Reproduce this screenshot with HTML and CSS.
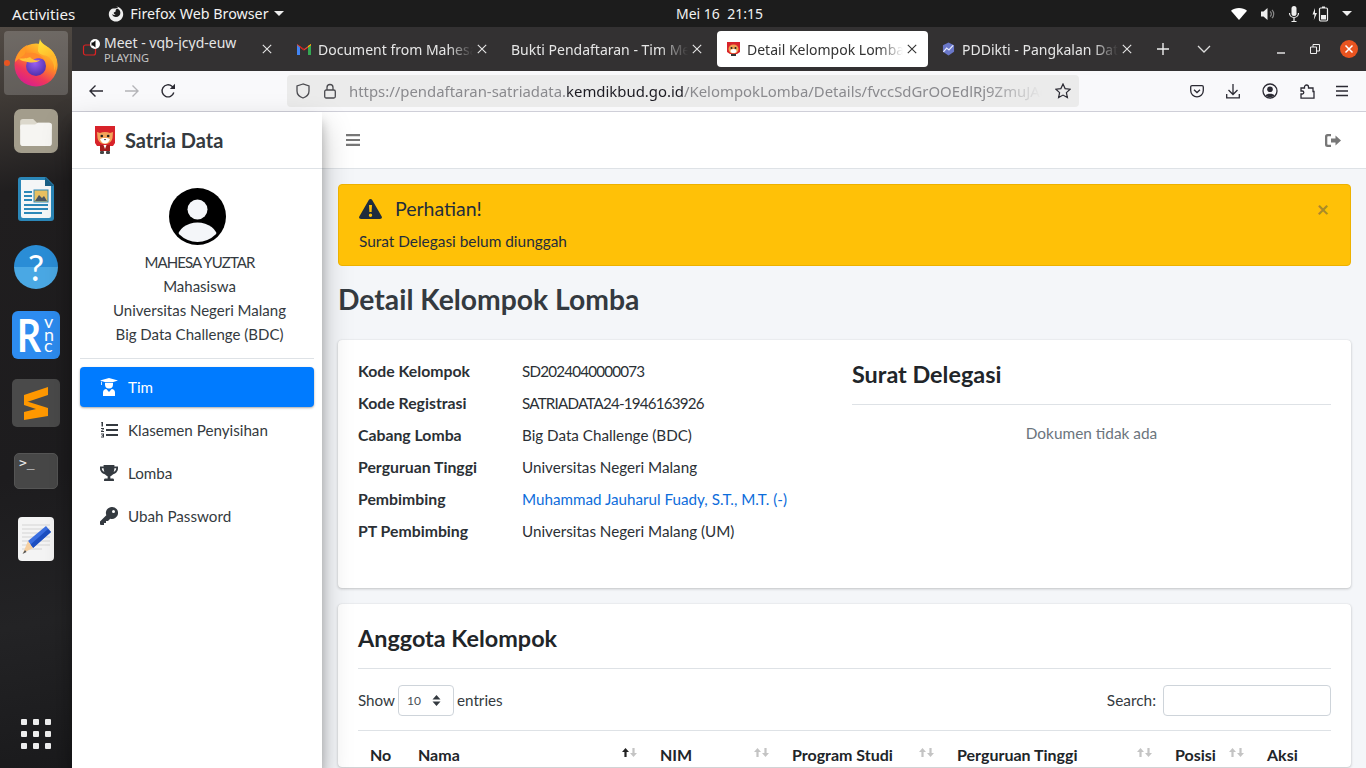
FILE: index.html
```html
<!DOCTYPE html>
<html lang="en">
<head>
  <meta charset="UTF-8">
  <title>Detail Kelompok Lomba</title>
  <link rel="stylesheet" href="styles.css">
</head>
<body>

  <header class="topbar">
    <span class="activities">Activities</span>
    <span class="appmenu">
      <svg class="app-icon" width="18" height="18" viewBox="0 0 18 18"><path fill="#eee" d="M9 1.500c1 .2 2 .9 2.400 1.800-1-.4-2.200-.3-3 .2 2.600-.3 5 1.500 5 4.200 0 2.600-2 4.300-4.400 4.300-2 0-3.600-1.300-3.800-3 .9 1 2.300 1.300 3.500.9-1.200-.5-1.900-1.200-2-2.200.5-.5 1.200-.9 1.900-1-.3-1.100.3-2.200 1-3C8.600 3.200 6 3.400 4.900 3.800 3 5 1.800 7 1.800 9.200c0 4 3.200 7.300 7.200 7.300s7.200-3.300 7.200-7.300C16.200 5.200 13 1.700 9 1.500z"/></svg>
      <span>Firefox Web Browser</span>
      <i class="caret"></i>
    </span>
    <span class="clock">Mei 16&nbsp;&nbsp;21:15</span>
    <span class="tray">
      <svg width="18" height="14" viewBox="0 0 18 14"><path fill="#fff" d="M1 3.800C3 2 6 1 9 1s6 1 8 2.800L9 13z"/></svg>
      <svg width="16" height="14" viewBox="0 0 16 14"><path fill="#eee" d="M1 4.500h2.500L7.500 1v12L3.500 9.500H1z"/><path fill="none" stroke="#888" stroke-width="1.200" d="M10 4.500a3 3 0 0 1 0 5M12 2.800a6 6 0 0 1 0 8.400"/></svg>
      <svg width="12" height="18" viewBox="0 0 12 18"><rect x="3.500" y="1" width="5" height="10" rx="2.500" fill="#eee"/><path fill="none" stroke="#eee" stroke-width="1.200" d="M1.500 8a4.500 4.500 0 0 0 9 0M6 12.500V16M3.500 16.500h5"/></svg>
      <svg width="18" height="18" viewBox="0 0 18 18"><path fill="#eee" d="M3 3 .5 9.500h2L1.800 15 5 8H3z"/><rect x="7.500" y="3" width="8" height="13" rx="1.200" fill="none" stroke="#eee" stroke-width="1.200"/><rect x="10" y="1.500" width="3" height="1.500" fill="#eee"/><rect x="9" y="10" width="5" height="4.500" fill="#eee"/></svg>
      <i class="caret"></i>
    </span>
  </header>

  <div class="desktop">
    <nav class="dock">
      <div class="dock-item dock-active">
        <i class="run-dot"></i>
        <svg width="46" height="48" viewBox="0 0 46 48">
          <defs>
            <linearGradient id="ffBody" x1="0.85" y1="0.1" x2="0.35" y2="1"><stop offset="0" stop-color="#ffd02e"/><stop offset=".4" stop-color="#ff8a26"/><stop offset=".72" stop-color="#f0385a"/><stop offset="1" stop-color="#d81f8c"/></linearGradient>
            <linearGradient id="ffHorn" x1="0" y1="0" x2="0.4" y2="1"><stop offset="0" stop-color="#ffe93a"/><stop offset="1" stop-color="#ffa726"/></linearGradient>
            <radialGradient id="ffCore" cx=".45" cy=".35" r=".7"><stop offset="0" stop-color="#9a5ff0"/><stop offset="1" stop-color="#4a2da8"/></radialGradient>
          </defs>
          <circle cx="23" cy="26" r="21.500" fill="url(#ffBody)"/>
          <path fill="url(#ffHorn)" d="M27 0c1 5 8 7 12 12 5 6 6 13 5 19-1-6-5-12-10-14-5-1-8-2-9-5 0-4 1-8 2-12z"/>
          <path fill="#ff9a26" d="M14 6c-5 3-11 9-12 17 3-3 6-5 9-5 1-4 2-8 3-12z"/>
          <path fill="#ffb52e" d="M36 18c4 4 6 9 5 14 2-4 3-10 1-15-2-2-4-1-6 1z"/>
          <circle cx="23" cy="27" r="10" fill="url(#ffCore)"/>
          <path fill="#ff8a2a" d="M6 21c3-4 8-8 14-7 5 .5 9 3 11 7-4-2.500-8-2-11 0-2 2-8 1.500-14 0z"/>
          <path fill="#ffc53a" d="M6 19.500c4 0 9 0 11-1.500 2 3 7 4 10 3-3 3-10 3-14 1.500-3 0-5-1-7-3z"/>
        </svg>
      </div>
      <div class="dock-item">
        <div class="files-tile">
          <svg width="32" height="28" viewBox="0 0 34 30"><path fill="#dcd8cc" d="M0 4a3 3 0 0 1 3-3h11l4 4h13a3 3 0 0 1 3 3v4H0z"/><path fill="#f6f5f2" d="M0 9a2 2 0 0 1 2-2h14l3-2h12a3 3 0 0 1 3 3v19a3 3 0 0 1-3 3H3a3 3 0 0 1-3-3z"/></svg>
        </div>
      </div>
      <div class="dock-item">
        <svg width="36" height="44" viewBox="0 0 36 44"><path fill="#2b87b8" d="M3 0h25l8 8v33a3 3 0 0 1-3 3H3a3 3 0 0 1-3-3V3a3 3 0 0 1 3-3z"/><path fill="#f4f6f7" d="M3 3h24v6h6v30a2 2 0 0 1-2 2H5a2 2 0 0 1-2-2z"/><path fill="#185f86" d="M27 0l9 9h-9z"/><path fill="#2b87b8" d="M6 14h8v2H6zM6 18h8v2H6zM6 22h8v2H6zM6 27h24v2H6zM6 31h24v2H6zM6 35h18v2H6z"/><rect x="16" y="13" width="14" height="12" fill="#e8c060" stroke="#2b87b8"/><path fill="#4a5560" d="M17 24l4-6 3 3 2-2 3 5z"/></svg>
      </div>
      <div class="dock-item"><div class="help-tile">?</div></div>
      <div class="dock-item">
        <svg width="48" height="48" viewBox="0 0 48 48"><rect width="48" height="48" rx="6" fill="#2d8cf0"/><text x="5" y="41" class="rvnc-r" textLength="24" lengthAdjust="spacingAndGlyphs">R</text><text x="32" y="17" class="rvnc-s">v</text><text x="32" y="30" class="rvnc-s">n</text><text x="32" y="41" class="rvnc-s">c</text></svg>
      </div>
      <div class="dock-item">
        <svg width="48" height="48" viewBox="0 0 48 48"><rect width="48" height="48" rx="5" fill="#4a4a4a"/><path fill="#ff9800" d="M12 16 36 8v8L12 24z"/><path fill="#ff9800" d="M12 21.500 36 29v8l-24 4v-8l12-3-12-4z"/></svg>
      </div>
      <div class="dock-item"><div class="term-tile">&gt;_</div></div>
      <div class="dock-item">
        <svg width="36" height="44" viewBox="0 0 36 44"><rect width="36" height="44" rx="4" fill="#f4f4f4"/><path stroke="#d4d4d4" fill="none" d="M4 8h28M4 12h28M4 16h28M4 20h28M4 24h28M4 28h28M4 32h20"/><path fill="#3b6fe0" d="M10 24 28 9l5 6-18 16z"/><path fill="#1d4fc0" d="M12 28 30 12l3 3-18 16z"/><path fill="#f5cfa0" d="M10 24l5 7-10 5z"/><path fill="#555" d="M7 33l-2.500 4 4-2z"/></svg>
      </div>
      <div class="dock-grid">
        <i></i><i></i><i></i><i></i><i></i><i></i><i></i><i></i><i></i>
      </div>
    </nav>

    <div class="browser">
      <div class="tabbar">
        <div class="tab tab-meet">
          <svg width="20" height="20" viewBox="0 0 20 20"><rect x="1.500" y="6" width="12" height="10" rx="2" fill="none" stroke="#d22" stroke-width="1.200"/><circle cx="13" cy="5" r="5" fill="#fff"/><path d="M9.500 3.500h1.500L13.500 1.500v7L11 6.500H9.500z" fill="#111"/></svg>
          <span class="tab-lines"><span class="tab-title">Meet - vqb-jcyd-euw</span><small>PLAYING</small></span>
          <svg class="tab-x" width="10" height="10" viewBox="0 0 10 10"><path stroke="#e6e6e6" stroke-width="1.100" d="M.8.800l8.400 8.400M9.200.800.800 9.200"/></svg>
        </div>
        <div class="tab">
          <svg width="14" height="11" viewBox="0 0 14 11"><path fill="#ea4335" d="M0 1.500 7 6.500l7-5V0L7 5 0 0z"/><path fill="#4285f4" d="M0 1v10h3V3.500z"/><path fill="#34a853" d="M14 1v10h-3V3.500z"/><path fill="#c5221f" d="M3 3.500 7 6.500v-1.500L3 2z"/><path fill="#fbbc04" d="M11 3.500 14 1.200V0l-3 2z"/></svg>
          <span class="tab-title">Document from Mahesa</span>
          <svg class="tab-x" width="10" height="10" viewBox="0 0 10 10"><path stroke="#e6e6e6" stroke-width="1.100" d="M.8.800l8.400 8.400M9.200.800.800 9.200"/></svg>
        </div>
        <div class="tab tab-plain">
          <span class="tab-title">Bukti Pendaftaran - Tim Meja</span>
          <svg class="tab-x" width="10" height="10" viewBox="0 0 10 10"><path stroke="#e6e6e6" stroke-width="1.100" d="M.8.800l8.400 8.400M9.200.800.800 9.200"/></svg>
        </div>
        <div class="tab tab-active">
          <svg width="13" height="14" viewBox="0 0 13 14"><path fill="#d8232a" d="M0 0h13v10l-3 2H3l-3-2z"/><ellipse cx="6.500" cy="7" rx="5" ry="4.500" fill="#f0a050"/><ellipse cx="6.500" cy="9" rx="3" ry="2" fill="#fff"/><circle cx="4.500" cy="6" r="1" fill="#222"/><circle cx="8.500" cy="6" r="1" fill="#222"/><rect x="4" y="12" width="5" height="2" fill="#333"/></svg>
          <span class="tab-title">Detail Kelompok Lomba</span>
          <svg class="tab-x" width="10" height="10" viewBox="0 0 10 10"><path stroke="#333" stroke-width="1.100" d="M.8.800l8.400 8.400M9.200.800.800 9.200"/></svg>
        </div>
        <div class="tab">
          <svg width="13" height="14" viewBox="0 0 14 14"><path fill="#6a77c9" d="M7 0l6 3v7l-6 4-6-4V3z"/><path fill="none" stroke="#e8ecff" stroke-width="1.300" d="M1.500 10 5 6l2.500 2 4.500-5"/></svg>
          <span class="tab-title">PDDikti - Pangkalan Data</span>
          <svg class="tab-x" width="10" height="10" viewBox="0 0 10 10"><path stroke="#e6e6e6" stroke-width="1.100" d="M.8.800l8.400 8.400M9.200.800.800 9.200"/></svg>
        </div>
        <svg class="tab-plus" width="14" height="14" viewBox="0 0 14 14"><path stroke="#eee" stroke-width="1.400" d="M7 1v12M1 7h12"/></svg>
        <svg class="tab-list" width="14" height="8" viewBox="0 0 14 8"><path fill="none" stroke="#ddd" stroke-width="1.300" d="M1 1l6 6 6-6"/></svg>
        <span class="winctl">
          <svg width="10" height="10" viewBox="0 0 10 10"><path stroke="#eee" stroke-width="1.400" d="M1 9h8"/></svg>
          <svg width="10" height="10" viewBox="0 0 10 10"><path fill="none" stroke="#eee" d="M.5 3h6v6.500h-6zM3 3V.5h6.500V7H7"/></svg>
          <span class="win-close"><svg width="10" height="10" viewBox="0 0 10 10"><path stroke="#fff" stroke-width="1.500" d="M1.500 1.500l7 7M8.500 1.500l-7 7"/></svg></span>
        </span>
      </div>

      <div class="navbar">
        <svg class="nav-back" width="16" height="14" viewBox="0 0 16 14"><path fill="none" stroke="#2b2a33" stroke-width="1.400" d="M15 7H2M7.500 1.500 2 7l5.500 5.500"/></svg>
        <svg class="nav-fwd" width="16" height="14" viewBox="0 0 16 14"><path fill="none" stroke="#b4b4b8" stroke-width="1.400" d="M1 7h13M8.500 1.500 14 7l-5.500 5.500"/></svg>
        <svg class="nav-reload" width="16" height="16" viewBox="0 0 16 16"><path fill="none" stroke="#2b2a33" stroke-width="1.400" d="M13.800 9.500A6 6 0 1 1 12 3.300L14.500 5"/><path fill="#2b2a33" d="M15 .8v5.200H9.800z"/></svg>
        <div class="urlbar">
          <svg width="16" height="16" viewBox="0 0 16 16"><path fill="none" stroke="#4a4a4f" stroke-width="1.300" d="M8 1 2 3v5c0 3.500 3 6 6 7 3-1 6-3.500 6-7V3z"/></svg>
          <svg width="14" height="16" viewBox="0 0 14 16"><path fill="none" stroke="#4a4a4f" stroke-width="1.300" d="M4 7V4.500a3 3 0 0 1 6 0V7"/><rect x="1.700" y="7" width="10.600" height="8" rx="1.500" fill="none" stroke="#4a4a4f" stroke-width="1.300"/></svg>
          <span class="url">https://pendaftaran-satriadata.<b>kemdikbud.go.id</b>/KelompokLomba/Details/fvccSdGrOOEdlRj9ZmuJAcQ</span>
          <svg width="16" height="16" viewBox="0 0 16 16"><path fill="none" stroke="#2b2a33" stroke-width="1.200" d="M8 1l2.100 4.600 5 .6-3.700 3.400 1 5L8 12.100 3.600 14.600l1-5L.9 6.200l5-.6z"/></svg>
        </div>
        <div class="nav-tools">
          <svg width="14" height="13" viewBox="0 0 14 13"><path fill="none" stroke="#2b2a33" stroke-width="1.300" d="M2 .7h10a1.300 1.300 0 0 1 1.300 1.300v3.500a6.300 6.300 0 0 1-12.600 0V2A1.300 1.300 0 0 1 2 .7z"/><path fill="none" stroke="#2b2a33" stroke-width="1.300" d="M4 4.800l3 2.800 3-2.800"/></svg>
          <svg width="14" height="15" viewBox="0 0 14 15"><path fill="none" stroke="#2b2a33" stroke-width="1.300" d="M7 0v10M2.500 6 7 10.500 11.500 6M.7 10v3.800h12.600V10"/></svg>
          <svg width="16" height="16" viewBox="0 0 16 16"><circle cx="8" cy="8" r="7" fill="none" stroke="#2b2a33" stroke-width="1.300"/><circle cx="8" cy="6.300" r="2.800" fill="#2b2a33"/><path fill="#2b2a33" d="M3.500 12.500c1-2.500 8-2.500 9 0-2 2-7 2-9 0z"/></svg>
          <svg width="15" height="15" viewBox="0 0 15 15"><path fill="none" stroke="#2b2a33" stroke-width="1.300" d="M1 14.200V10h1.300a1.500 1.500 0 0 0 0-3H1V4h3.500V3a2 2 0 0 1 4 0v1H13v3.500h1V14.200z"/></svg>
          <svg width="14" height="12" viewBox="0 0 14 12"><path stroke="#2b2a33" stroke-width="1.300" d="M1 1.500h12M1 6h12M1 10.500h12"/></svg>
        </div>
      </div>

      <div class="page">
        <aside class="sidebar">
          <div class="brand">
            <svg class="brand-logo" width="20" height="28" viewBox="0 0 20 28"><path fill="#d8232a" d="M0 0h20v17l-2 3H2l-2-3z"/><path fill="#f3a45a" d="M2 6l3 1c3-1.500 7-1.500 10 0l3-1-.5 6c-1 4-4 6-7.500 6s-6.500-2-7.500-6z"/><path fill="#fff" d="M5 13c2-1.500 8-1.500 10 0-1 3-3 4.500-5 4.500S6 16 5 13z"/><circle cx="6.800" cy="10" r="1.300" fill="#222"/><circle cx="13.200" cy="10" r="1.300" fill="#222"/><path fill="#333" d="M8.800 13h2.400L10 14.500z"/><rect x="5" y="19" width="10" height="6" fill="#a51c1c"/><path fill="#fff" d="M8.500 19h3l-1.500 4z"/><rect x="5" y="25" width="4" height="3" rx="1" fill="#444"/><rect x="11" y="25" width="4" height="3" rx="1" fill="#444"/></svg>
            <span>Satria Data</span>
          </div>
          <div class="sidebar-body">
            <div class="profile">
              <svg class="avatar" width="57" height="57" viewBox="0 0 57 57"><defs><clipPath id="avatarClip"><circle cx="28.500" cy="28.500" r="25.500"/></clipPath></defs><circle cx="28.500" cy="28.500" r="28.500" fill="#000"/><circle cx="28.500" cy="21.500" r="10" fill="#f4f6f9"/><ellipse cx="28.500" cy="50" rx="20" ry="15.500" fill="#f4f6f9" clip-path="url(#avatarClip)"/></svg>
              <div class="profile-line profile-name">MAHESA YUZTAR</div>
              <div class="profile-line">Mahasiswa</div>
              <div class="profile-line">Universitas Negeri Malang</div>
              <div class="profile-line">Big Data Challenge (BDC)</div>
            </div>
            <ul class="menu">
              <li class="menu-item menu-active">
                <svg width="18" height="18" viewBox="0 0 18 18"><path fill="#fff" d="M0 2.500 9 0l9 2.500L12.500 4.200H5.500zM1 3.500v3.500h.8V3.800zM5 5h8v1.500a4 4 0 0 1-8 0zM3 18v-3.500C3 12.500 4.500 11 6.300 11L9 14l2.700-3c1.800 0 3.300 1.500 3.300 3.500V18z"/></svg>
                <span>Tim</span>
              </li>
              <li class="menu-item">
                <svg width="18" height="16" viewBox="0 0 18 16"><path fill="#343a40" d="M6 2h12v2H6zM6 7h12v2H6zM6 12h12v2H6zM1.500 0h1.500v4.500H1.500L1.500 1H1zM1 6h3v1L2 9h2v1H1V9l2-2H1zM1 11.500h3v4H1v-1h2v-.5H1.800v-.8H3V12.500H1z"/></svg>
                <span>Klasemen Penyisihan</span>
              </li>
              <li class="menu-item">
                <svg width="20" height="18" viewBox="0 0 20 18"><path fill="#343a40" d="M4 0h12v1.800h4V4c0 3-2.500 5.800-5.500 6.300C13.500 11.500 12.500 12 11.500 12.500V15H14c1 0 1.500.7 1.500 1.500V18h-11v-1.500C4.500 15.700 5 15 6 15h2.500v-2.500c-1-.5-2-1-3-2.200C2.500 9.800 0 7 0 4V1.800h4zM2 3.600V4c0 1.500 1.200 3 2.800 3.800C4.300 6.500 4.100 5 4 3.600zM18 3.600h-2c-.1 1.400-.3 2.900-.8 4.200C16.800 7 18 5.500 18 4z"/></svg>
                <span>Lomba</span>
              </li>
              <li class="menu-item">
                <svg width="18" height="18" viewBox="0 0 18 18"><path fill="#343a40" fill-rule="evenodd" d="M12 0a6 6 0 1 1-1.800 11.700L8 14H6v2H4v2H1a1 1 0 0 1-1-1v-2.500l6.300-6.300A6 6 0 0 1 12 0zm1.500 3a1.500 1.500 0 1 0 0 3 1.500 1.500 0 0 0 0-3z"/></svg>
                <span>Ubah Password</span>
              </li>
            </ul>
          </div>
        </aside>

        <div class="main">
          <div class="main-header">
            <svg width="14" height="12" viewBox="0 0 14 12"><path fill="#777" d="M0 0h14v2.200H0zM0 4.900h14v2.200H0zM0 9.800h14V12H0z"/></svg>
            <svg width="16" height="13" viewBox="0 0 16 13"><path fill="#777" d="M10.500 1.500l5.500 5-5.500 5V8.500H6v-4h4.500zM6 0v2.300H3a.7.7 0 0 0-.7.7v7c0 .4.300.7.700.7h3V13H2.500A2.500 2.500 0 0 1 0 10.500v-8A2.500 2.500 0 0 1 2.500 0z"/></svg>
          </div>
          <div class="content">
            <div class="alert">
              <span class="alert-close">×</span>
              <div class="alert-title">
                <svg width="23" height="20" viewBox="0 0 23 20"><path fill="#1f2d3d" fill-rule="evenodd" d="M11.500 0c.7 0 1.300.4 1.700 1l9.500 16.500c.7 1.200-.2 2.500-1.700 2.500h-19C.5 20-.4 18.700.3 17.500L9.800 1c.4-.6 1-1 1.700-1zM10 6l.4 7h2.200l.4-7zm1.500 8.500a1.700 1.700 0 1 0 0 3.400 1.700 1.700 0 0 0 0-3.400z"/></svg>
                <span>Perhatian!</span>
              </div>
              <div class="alert-text">Surat Delegasi belum diunggah</div>
            </div>

            <h1 class="page-title">Detail Kelompok Lomba</h1>

            <section class="card card-detail">
              <dl class="detail-list">
                <dt>Kode Kelompok</dt><dd class="code">SD2024040000073</dd>
                <dt>Kode Registrasi</dt><dd class="code">SATRIADATA24-1946163926</dd>
                <dt>Cabang Lomba</dt><dd>Big Data Challenge (BDC)</dd>
                <dt>Perguruan Tinggi</dt><dd>Universitas Negeri Malang</dd>
                <dt>Pembimbing</dt><dd><a href="#">Muhammad Jauharul Fuady, S.T., M.T. (-)</a></dd>
                <dt>PT Pembimbing</dt><dd>Universitas Negeri Malang (UM)</dd>
              </dl>
              <div class="delegasi">
                <h2>Surat Delegasi</h2>
                <p>Dokumen tidak ada</p>
              </div>
            </section>

            <section class="card card-members">
              <h2 class="members-title">Anggota Kelompok</h2>
              <div class="dt-controls">
                <label class="dt-length"><span class="dt-text">Show</span> <span class="dt-select">10<svg width="9" height="11" viewBox="0 0 9 11"><path fill="#343a40" d="M4.500 0 8.500 4.500h-8zM4.500 11 .5 6.500h8z"/></svg></span> <span class="dt-text">entries</span></label>
                <label class="dt-search"><span class="dt-text">Search:</span> <input type="text"></label>
              </div>
              <table class="dt-table">
                <thead>
                  <tr>
                    <th class="col-no">No</th>
                    <th class="col-nama"><span class="th-in">Nama <svg class="sort sort-asc" width="15" height="9" viewBox="0 0 15 9"><path class="sort-up" d="M3.500 0 7 4H4.600v5H2.400V4H0z"/><path class="sort-down" d="M11.500 9 8 5h2.400V0h2.200v5H15z"/></svg></span></th>
                    <th class="col-nim"><span class="th-in">NIM <svg class="sort" width="15" height="9" viewBox="0 0 15 9"><path class="sort-up" d="M3.500 0 7 4H4.600v5H2.400V4H0z"/><path class="sort-down" d="M11.500 9 8 5h2.400V0h2.200v5H15z"/></svg></span></th>
                    <th class="col-prodi"><span class="th-in">Program Studi <svg class="sort" width="15" height="9" viewBox="0 0 15 9"><path class="sort-up" d="M3.500 0 7 4H4.600v5H2.400V4H0z"/><path class="sort-down" d="M11.500 9 8 5h2.400V0h2.200v5H15z"/></svg></span></th>
                    <th class="col-pt"><span class="th-in">Perguruan Tinggi <svg class="sort" width="15" height="9" viewBox="0 0 15 9"><path class="sort-up" d="M3.500 0 7 4H4.600v5H2.400V4H0z"/><path class="sort-down" d="M11.500 9 8 5h2.400V0h2.200v5H15z"/></svg></span></th>
                    <th class="col-posisi"><span class="th-in">Posisi <svg class="sort" width="15" height="9" viewBox="0 0 15 9"><path class="sort-up" d="M3.500 0 7 4H4.600v5H2.400V4H0z"/><path class="sort-down" d="M11.500 9 8 5h2.400V0h2.200v5H15z"/></svg></span></th>
                    <th class="col-aksi">Aksi</th>
                  </tr>
                </thead>
              </table>
            </section>
          </div>
        </div>
      </div>
    </div>
  </div>

</body>
</html>
```

FILE: styles.css
```css
* {
  box-sizing: border-box;
}
html, body {
  margin: 0;
  height: 768px;
  overflow: hidden;
}
body {
  font-family: "Lato", "Noto Sans", sans-serif;
  font-size: 15.2px;
  color: #343a40;
  background: #111;
}

/* gnome bar */
.topbar {
  height: 27px;
  background: #1c1c1c;
  color: #f2f2f2;
  font-family: "Noto Sans", sans-serif;
  font-size: 14.3px;
  display: flex;
  align-items: center;
  padding-left: 12px;
  position: relative;
}
.activities {
  font-size: 15.2px;
}
.appmenu {
  display: flex;
  align-items: center;
  margin-left: 32px;
}
.app-icon {
  margin-right: 5px;
}
.caret {
  display: inline-block;
  width: 0;
  height: 0;
  border-left: 5px solid transparent;
  border-right: 5px solid transparent;
  border-top: 5px solid #eee;
}
.appmenu .caret {
  margin-left: 5px;
}
.clock {
  position: absolute;
  left: 676px;
  top: 4px;
  font-size: 14px;
}
.tray {
  margin-left: auto;
  margin-right: 14px;
  display: flex;
  align-items: center;
  gap: 12px;
}

/* dock */
.desktop {
  display: flex;
  height: 741px;
}
.dock {
  width: 72px;
  flex: none;
  padding-top: 2px;
  display: flex;
  flex-direction: column;
  align-items: center;
  background: linear-gradient(170deg, #524b45 0, #3e3935 10%, #201e1f 22%, #1d1c1e 60%, #232325 80%, #1a1a1c 100%);
}
.dock-item {
  width: 72px;
  height: 68px;
  flex: none;
  display: flex;
  align-items: center;
  justify-content: center;
  position: relative;
}
.dock-active::before {
  content: "";
  position: absolute;
  left: 4px;
  top: 2px;
  width: 64px;
  height: 64px;
  border-radius: 4px;
  background: rgba(255, 255, 255, .18);
}
.dock-active svg {
  position: relative;
}
.run-dot {
  position: absolute;
  left: 4px;
  top: 31px;
  width: 6px;
  height: 6px;
  border-radius: 50%;
  background: #e95420;
}
.files-tile {
  width: 44px;
  height: 44px;
  border-radius: 7px;
  background: #a39d8c;
  display: flex;
  align-items: center;
  justify-content: center;
  padding: 2px 0 0;
}
.help-tile {
  width: 44px;
  height: 44px;
  border-radius: 50%;
  background: linear-gradient(#2a8dd6 50%, #4aa8e4 50%);
  color: #fff;
  font-size: 36px;
  line-height: 44px;
  text-align: center;
}
.rvnc-r {
  font: bold 46px "Lato", sans-serif;
  fill: #fff;
}
.rvnc-s {
  font: 18px "Lato", sans-serif;
  fill: #fff;
}
.term-tile {
  width: 44px;
  height: 36px;
  border-radius: 5px;
  background: #474747;
  border: 1px solid #555;
  color: #eee;
  font: 13px/14px "DejaVu Sans Mono", monospace;
  padding: 2px 4px;
}
.dock-grid {
  margin-top: auto;
  margin-bottom: 19px;
  display: grid;
  grid-template-columns: repeat(3, 6px);
  gap: 6px;
}
.dock-grid i {
  height: 6px;
  border-radius: 1px;
  background: #eee;
}

/* firefox */
.browser {
  flex: 1;
  min-width: 0;
  display: flex;
  flex-direction: column;
}
.tabbar {
  height: 44px;
  flex: none;
  background: #333132;
  display: flex;
  align-items: center;
  gap: 4px;
  font-family: "Noto Sans", sans-serif;
  font-size: 14px;
  color: #e6e6e6;
}
.tab {
  width: 211px;
  height: 36px;
  flex: none;
  display: flex;
  align-items: center;
  padding: 0 11px 0 10px;
  border-radius: 4px;
}
.tab > svg:first-child {
  margin-right: 7px;
  flex: none;
}
.tab-plain {
  padding-left: 9px;
}
.tab-active {
  background: #fff;
  color: #333;
}
.tab-title {
  flex: 1;
  min-width: 0;
  white-space: nowrap;
  overflow: hidden;
  margin-right: 4px;
  -webkit-mask-image: linear-gradient(to right, #000 84%, transparent);
  mask-image: linear-gradient(to right, #000 84%, transparent);
}
.tab-x {
  flex: none;
}
.tab-meet > svg:first-child {
  margin-right: 2px;
}
.tab-lines {
  flex: 1;
  min-width: 0;
  display: flex;
  flex-direction: column;
  line-height: 16px;
  padding-top: 1px;
}
.tab-lines .tab-title {
  flex: none;
  -webkit-mask-image: none;
  mask-image: none;
}
.tab-lines small {
  font-size: 11px;
  line-height: 13px;
  color: #c4c4c4;
}
.tab-plus {
  margin-left: 9px;
}
.tab-list {
  margin-left: 23px;
}
.winctl {
  margin-left: auto;
  margin-right: 8px;
  display: flex;
  align-items: center;
  gap: 24px;
}
.win-close {
  width: 18px;
  height: 18px;
  margin-left: -4px;
  border-radius: 50%;
  background: #e95420;
  display: flex;
  align-items: center;
  justify-content: center;
}
.navbar {
  height: 41px;
  flex: none;
  background: #f9f9fb;
  border-bottom: 1px solid #cfcfd8;
  display: flex;
  align-items: center;
  padding-left: 16px;
}
.nav-fwd,
.nav-reload {
  margin-left: 20px;
}
.urlbar {
  width: 792px;
  height: 32px;
  margin-left: 111px;
  flex: none;
  background: #ebebeb;
  border-radius: 4px;
  display: flex;
  align-items: center;
  padding: 0 8px;
  gap: 12px;
}
.url {
  flex: 1;
  min-width: 0;
  margin-right: -6px;
  white-space: nowrap;
  overflow: hidden;
  font-family: "Noto Sans", sans-serif;
  font-size: 14.9px;
  color: #8a8a8e;
  -webkit-mask-image: linear-gradient(to right, #000 91%, transparent 99%);
  mask-image: linear-gradient(to right, #000 91%, transparent 99%);
}
.url b {
  font-weight: 400;
  color: #1c1b22;
}
.nav-tools {
  margin-left: 111px;
  display: flex;
  align-items: center;
  gap: 22px;
}
.nav-tools svg:last-child {
  margin-left: -2px;
}

/* satria data page */
.page {
  flex: 1;
  min-height: 0;
  display: flex;
}
.sidebar {
  width: 250px;
  flex: none;
  background: #fff;
  box-shadow: 0 14px 28px rgba(0, 0, 0, .25), 0 10px 10px rgba(0, 0, 0, .22);
  position: relative;
}
.brand {
  height: 57px;
  border-bottom: 1px solid #dee2e6;
  display: flex;
  align-items: center;
  padding-left: 23px;
  font-size: 20px;
  font-weight: 700;
}
.brand-logo {
  margin-right: 10px;
}
.sidebar-body {
  padding: 19px 8px 0;
}
.profile {
  text-align: center;
  font-size: 15px;
  line-height: 24px;
  padding-bottom: 12px;
  border-bottom: 1px solid #dee2e6;
}
.profile-line {
  padding-left: 5px;
}
.profile-name {
  letter-spacing: -.9px;
}
.avatar {
  display: block;
  margin: 0 auto 5px;
}
.menu {
  list-style: none;
  margin: 8px 0 0;
  padding: 0;
}
.menu-item {
  height: 40px;
  margin-bottom: 3px;
  padding-left: 20px;
  border-radius: 4px;
  display: flex;
  align-items: center;
  gap: 10px;
}
.menu-item svg {
  flex: none;
  width: 18px;
}
.menu-active {
  background: #007bff;
  color: #fff;
  box-shadow: 0 1px 3px rgba(0, 0, 0, .12), 0 1px 2px rgba(0, 0, 0, .24);
}
.main {
  flex: 1;
  min-width: 0;
  background: #f4f6f9;
}
.main-header {
  height: 57px;
  background: #fff;
  border-bottom: 1px solid #dee2e6;
  display: flex;
  align-items: center;
  justify-content: space-between;
  padding: 0 25px 0 24px;
}
.content {
  padding: 15px 15px 0 16px;
}
.alert {
  height: 82px;
  background: #ffc107;
  border: 1px solid #edb100;
  border-radius: 4px;
  padding: 12px 20px;
  color: #1f2d3d;
  position: relative;
}
.alert-close {
  position: absolute;
  right: 21px;
  top: 11px;
  font-size: 21px;
  font-weight: 700;
  color: #a98a2a;
}
.alert-title {
  display: flex;
  align-items: center;
  gap: 13px;
  font-size: 19.5px;
  line-height: 24px;
}
.alert-text {
  margin-top: 8px;
  font-size: 15.4px;
  line-height: 24px;
}
.page-title {
  margin: 15px 0 23px;
  font-size: 28.3px;
  line-height: 36px;
  font-weight: 700;
}
.card {
  background: #fff;
  border-radius: 4px;
  box-shadow: 0 0 1px rgba(0, 0, 0, .125), 0 1px 3px rgba(0, 0, 0, .2);
  margin-bottom: 16px;
  padding: 0 20px;
}
.card-detail {
  height: 248px;
  display: flex;
  padding-top: 15px;
}
.detail-list {
  width: 494px;
  flex: none;
  margin: 0;
  display: grid;
  grid-template-columns: 164px 1fr;
  grid-auto-rows: 32px;
  line-height: 32px;
}
.detail-list dt {
  font-size: 15.8px;
  font-weight: 700;
  color: #2b3035;
}
.detail-list dd {
  margin: 0;
  color: #2b3035;
}
.detail-list .code {
  letter-spacing: -.8px;
}
.detail-list a {
  color: #0d6ddb;
  text-decoration: none;
}
.delegasi {
  flex: 1;
  padding-top: 1px;
}
.delegasi h2 {
  margin: 0 0 16px;
  height: 49px;
  line-height: 36px;
  font-size: 23.4px;
  font-weight: 700;
  color: #212529;
  border-bottom: 1px solid #dee2e6;
}
.delegasi p {
  margin: 0;
  text-align: center;
  color: #6c757d;
  font-size: 15.4px;
  line-height: 24px;
}
.members-title {
  margin: 0;
  height: 65px;
  padding-top: 18px;
  font-size: 23.4px;
  line-height: 32px;
  font-weight: 700;
  color: #212529;
  border-bottom: 1px solid #dee2e6;
}
.dt-controls {
  height: 62px;
  padding-top: 2px;
  display: flex;
  align-items: center;
  justify-content: space-between;
  border-bottom: 1px solid #dee2e6;
}
.dt-length, .dt-search {
  display: flex;
  align-items: center;
  gap: 3px;
}
.dt-text {
  margin-top: -2px;
}
.dt-select {
  width: 56px;
  height: 31px;
  border: 1px solid #ced4da;
  border-radius: 4px;
  background: #fff;
  font-size: 12px;
  color: #495057;
  display: flex;
  align-items: center;
  justify-content: space-between;
  padding: 0 12px 0 8px;
}
.dt-search {
  gap: 7px;
  font-size: 15.4px;
}
.dt-search input {
  width: 168px;
  height: 31px;
  border: 1px solid #ced4da;
  border-radius: 4px;
  background: #fff;
}
.dt-table {
  width: 973px;
  table-layout: fixed;
  border-collapse: collapse;
}
.dt-table th {
  padding: 12px 12px 0;
  text-align: left;
  font-size: 16px;
  font-weight: 700;
  color: #212529;
  line-height: 24px;
}
.th-in {
  display: flex;
  justify-content: space-between;
  align-items: center;
}
.sort {
  margin-right: -1px;
  flex: none;
  fill: #c4c4c4;
  transform: translateY(-3px);
}
.sort-asc .sort-up {
  fill: #222;
}
.col-no { width: 48px; }
.col-nama { width: 242px; }
.col-nim { width: 132px; }
.col-prodi { width: 165px; }
.col-pt { width: 218px; }
.col-posisi { width: 92px; }
.col-aksi { width: 76px; }
```
